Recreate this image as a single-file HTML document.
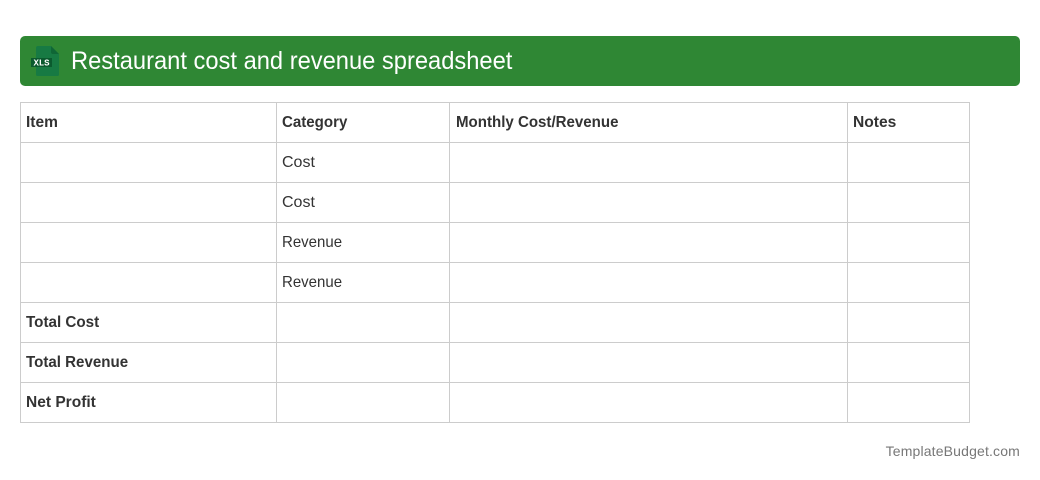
<!DOCTYPE html>
<html><head><meta charset="utf-8"><style>
html,body{margin:0;padding:0;background:#fff;width:1040px;height:480px;overflow:hidden}
body{position:relative;font-family:"Liberation Sans",sans-serif;color:#333}
.h{position:absolute;left:20px;top:36px;width:1000px;height:50px;background:#2f8734;border-radius:5px}
.t{position:absolute;left:71px;top:46px;font-size:25px;line-height:30px;color:#fff;white-space:nowrap;transform:scaleX(.948);transform-origin:0 0}
.l{position:absolute;background:#ccc}
.c{position:absolute;font-size:16px;line-height:20px;white-space:nowrap;transform-origin:0 0}
.b{font-weight:bold}
.f{position:absolute;right:20px;top:442px;font-size:14px;line-height:18px;color:#777;white-space:nowrap;letter-spacing:.16px}
</style></head><body>
<div class="h"></div>
<svg style="position:absolute;left:30px;top:45px" width="30" height="32" viewBox="0 0 30 32">
<path d="M8 1H21L29 9V29.500a1.500 1.500 0 0 1-1.500 1.500H7.500A1.500 1.500 0 0 1 6 29.500V3A2 2 0 0 1 8 1Z" fill="#177a43"/>
<path d="M21 1L29 9H23a2 2 0 0 1-2-2Z" fill="#0f6636"/>
<rect x="1" y="13" width="21" height="9" fill="#0b5a2e"/>
<text x="11.500" y="20.500" font-family="Liberation Mono,monospace" font-weight="bold" font-size="9" fill="#fff" text-anchor="middle" textLength="16">XLS</text>
</svg>
<div class="t">Restaurant cost and revenue spreadsheet</div>
<div class="l" style="left:20px;top:102px;width:950px;height:1px"></div>
<div class="l" style="left:20px;top:142px;width:950px;height:1px"></div>
<div class="l" style="left:20px;top:182px;width:950px;height:1px"></div>
<div class="l" style="left:20px;top:222px;width:950px;height:1px"></div>
<div class="l" style="left:20px;top:262px;width:950px;height:1px"></div>
<div class="l" style="left:20px;top:302px;width:950px;height:1px"></div>
<div class="l" style="left:20px;top:342px;width:950px;height:1px"></div>
<div class="l" style="left:20px;top:382px;width:950px;height:1px"></div>
<div class="l" style="left:20px;top:422px;width:950px;height:1px"></div>
<div class="l" style="left:20px;top:102px;width:1px;height:321px"></div>
<div class="l" style="left:276px;top:102px;width:1px;height:321px"></div>
<div class="l" style="left:449px;top:102px;width:1px;height:321px"></div>
<div class="l" style="left:847px;top:102px;width:1px;height:321px"></div>
<div class="l" style="left:969px;top:102px;width:1px;height:321px"></div>
<div class="c b" style="left:26px;top:113px;transform:scaleX(.97)">Item</div>
<div class="c b" style="left:282px;top:113px;transform:scaleX(.942)">Category</div>
<div class="c b" style="left:456px;top:113px;transform:scaleX(.942)">Monthly Cost/Revenue</div>
<div class="c b" style="left:853px;top:113px;transform:scaleX(.975)">Notes</div>
<div class="c" style="left:282px;top:153px">Cost</div>
<div class="c" style="left:282px;top:193px">Cost</div>
<div class="c" style="left:282px;top:233px;transform:scaleX(.9375)">Revenue</div>
<div class="c" style="left:282px;top:273px;transform:scaleX(.9375)">Revenue</div>
<div class="c b" style="left:26px;top:313px;transform:scaleX(.95)">Total Cost</div>
<div class="c b" style="left:26px;top:353px;transform:scaleX(.944)">Total Revenue</div>
<div class="c b" style="left:26px;top:393px;transform:scaleX(.97)">Net Profit</div>
<div class="f">TemplateBudget.com</div>
</body></html>
